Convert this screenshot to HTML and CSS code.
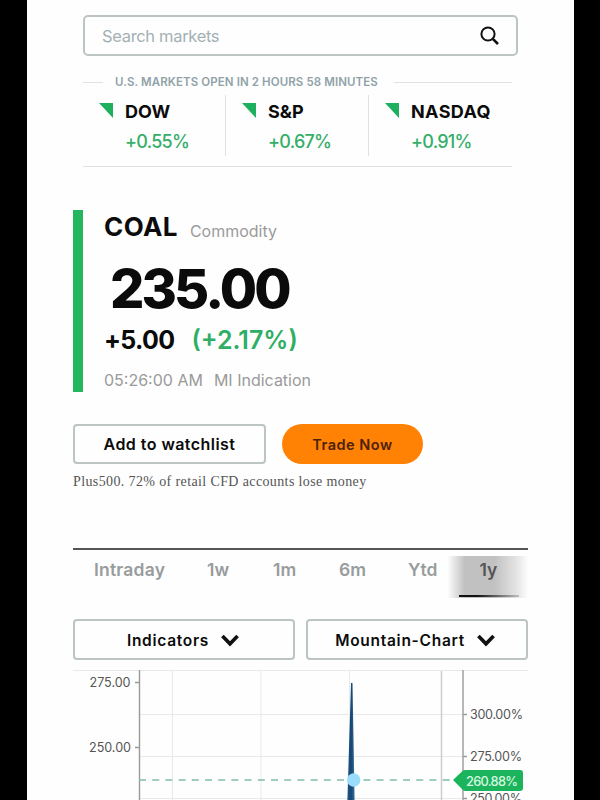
FILE: index.html
```html
<!DOCTYPE html>
<html lang="en">
<head>
<meta charset="utf-8">
<title>Coal price</title>
<link rel="stylesheet" href="styles.css">
</head>
<body>
<main class="page">
  <header class="top">
    <div class="search">
      <span class="placeholder">Search markets</span>
      <svg width="20" height="20" viewBox="0 0 20 20" fill="none" stroke="#111"><circle cx="8" cy="8" r="6.6" stroke-width="2"/><path d="M12.8 12.8L18 18" stroke-width="2.6"/></svg>
    </div>
    <div class="status"><span class="status-text">U.S. MARKETS OPEN IN 2 HOURS 58 MINUTES</span></div>
    <div class="indices">
      <div class="index"><i class="arrow"></i><div><div class="name">DOW</div><div class="change">+0.55%</div></div></div>
      <div class="index"><i class="arrow"></i><div><div class="name">S&amp;P</div><div class="change">+0.67%</div></div></div>
      <div class="index"><i class="arrow"></i><div><div class="name nasdaq">NASDAQ</div><div class="change">+0.91%</div></div></div>
    </div>
  </header>

  <section class="quote">
    <div class="title"><h1>COAL</h1><span class="kind">Commodity</span></div>
    <div class="price">235.00</div>
    <div class="move"><span class="abs">+5.00</span><span class="pct">(+2.17%)</span></div>
    <div class="time"><span class="clock">05:26:00 AM</span><span class="source">MI Indication</span></div>
  </section>

  <div class="actions">
    <button class="watch"><span>Add to watchlist</span></button>
    <button class="trade"><span>Trade Now</span></button>
  </div>
  <p class="disclaimer">Plus500. 72% of retail CFD accounts lose money</p>

  <nav class="ranges">
    <span class="r-intraday">Intraday</span><span class="r-1w">1w</span><span class="r-1m">1m</span><span class="r-6m">6m</span><span class="r-ytd">Ytd</span><span class="active">1y</span>
  </nav>

  <div class="selects">
    <button class="select"><span>Indicators</span><svg width="18" height="13" viewBox="0 0 18 13" fill="none" stroke="#111" stroke-width="3.6"><path d="M1.4 2L9 9.8L16.6 2"/></svg></button>
    <button class="select"><span>Mountain-Chart</span><svg width="18" height="13" viewBox="0 0 18 13" fill="none" stroke="#111" stroke-width="3.6"><path d="M1.4 2L9 9.8L16.6 2"/></svg></button>
  </div>

  <svg class="chart" width="455" height="130" viewBox="73 670 455 130">
    <defs><linearGradient id="peak"><stop offset="0" stop-color="#1c568b"/><stop offset=".5" stop-color="#154672"/><stop offset="1" stop-color="#386b97"/></linearGradient></defs>
    <path class="grid" d="M73 670.5H528M172.5 671V800M261 671V800M349.5 671V800M140 714.5H462M140 756.5H462M140 798.5H462"/>
    <path class="edge" d="M441.5 671V800"/>
    <path class="axis" d="M139.5 670V800M463 670V800M135 682.5H139M135 747.5H139M463 714.5H467M463 756.5H467M463 798.5H467"/>
    <path d="M351 683H352.5L354.6 800H347.4Z" fill="url(#peak)"/>
    <path class="level" d="M139 780H456"/>
    <circle cx="353.7" cy="780" r="6.7" fill="#99dcfb"/>
    <g class="labels">
      <text x="89.5" y="687" textLength="41">275.00</text>
      <text x="89" y="752" textLength="42">250.00</text>
      <text x="470" y="719" textLength="53">300.00%</text>
      <text x="470" y="761" textLength="52">275.00%</text>
      <text x="470" y="803" textLength="52">250.00%</text>
    </g>
    <path d="M453 780L463 770.5Q464 770 465 770H520Q523 770 523 773V788Q523 791 520 791H465Q464 791 463 790Z" fill="#1bb35b"/>
    <text class="tag" x="466" y="786" textLength="52">260.88%</text>
  </svg>
</main>
</body>
</html>
```
FILE: styles.css
```css
* { box-sizing: border-box; }
body { margin: 0; background: #000; font-family: Inter, "Liberation Sans", sans-serif; color: #0b0b0b; }
h1, p { margin: 0; }
button { font: inherit; color: inherit; background: none; padding: 0; }
span, h1, .name, .change, .price { white-space: nowrap; }

.page { width: 547px; height: 800px; margin-left: 27px; padding: 15px 46px 0; background: #fefefe; overflow: hidden; }

.top { width: 435px; margin-left: 10px; }
.search { display: flex; align-items: center; justify-content: space-between; height: 41px; padding: 0 16px 0 17px; border: 2px solid #bcc4c4; border-radius: 5px; }
.placeholder { font-size: 16.5px; color: #a3b0b4; letter-spacing: -.33px; }
.status { display: flex; align-items: center; gap: 12px; width: 429px; height: 16px; margin-top: 18px; }
.status::before { content: ""; width: 20px; height: 1px; background: #dfe3e3; }
.status::after { content: ""; flex: 1; height: 1px; margin-left: 4px; background: #dfe3e3; }
.status-text { font-size: 11.5px; font-weight: 600; color: #90a2a8; letter-spacing: .1px; }
.indices { display: grid; grid-template-columns: 143px 143px 143px; width: 429px; height: 77px; padding-top: 5px; border-bottom: 1px solid #dfe1e1; }
.index { display: flex; gap: 12px; height: 61px; padding-left: 16px; border-right: 1px solid #dfe1e1; }
.index:last-child { border: 0; }
.arrow { width: 14px; height: 15px; margin-top: 8px; background: #1eb05e; clip-path: polygon(0 0, 100% 0, 100% 100%); }
.name { font-size: 18px; font-weight: 700; line-height: 31px; height: 31px; padding-top: 1px; }
.nasdaq { letter-spacing: .4px; }
.change { font-size: 18px; font-weight: 500; line-height: 32px; color: #35ae69; letter-spacing: -.75px; }

.quote { height: 182px; margin-top: 43px; padding-left: 21px; border-left: 10px solid #22b65f; }
.title { display: flex; align-items: center; gap: 12px; height: 34px; }
h1 { font-size: 26px; font-weight: 700; line-height: 34px; letter-spacing: .4px; }
.kind { padding-top: 7px; font-size: 16px; color: #9b9b9b; }
.price { margin-left: 6px; font-size: 54px; font-weight: 800; line-height: 60px; height: 78px; padding-top: 15px; letter-spacing: -2.9px; }
.move { display: flex; gap: 17px; height: 36px; font-size: 25px; line-height: 36px; }
.abs { font-weight: 700; letter-spacing: -.65px; }
.pct { font-weight: 600; color: #2fae65; }
.time { display: flex; gap: 11px; height: 34px; margin-top: 5px; font-size: 16px; line-height: 34px; color: #9a9a9a; }

.actions { display: flex; gap: 16px; height: 40px; margin-top: 32px; }
.watch { width: 193px; border: 2px solid #bcc4c4; border-radius: 4px; font-size: 16px; font-weight: 600; letter-spacing: .45px; }
.trade { width: 141px; border: 0; border-radius: 20px; background: #ff8204; color: #4c210c; font-size: 14.5px; font-weight: 600; letter-spacing: .5px; }
.disclaimer { height: 20px; margin-top: 8px; font: 14px/20px "Liberation Serif", serif; color: #555; white-space: nowrap; letter-spacing: .38px; }

.ranges { display: flex; height: 50px; margin-top: 56px; border-top: 2px solid #555; font-size: 17.5px; font-weight: 600; line-height: 40px; color: #989c9c; }
.ranges span { flex: none; }
.r-intraday { width: 113px; margin-left: 21px; letter-spacing: .2px; }
.r-1w { width: 66px; }
.r-1m { width: 66px; }
.r-6m { width: 69px; }
.r-ytd { width: 39px; }
.ranges .active { width: 81px; height: 42px; margin-top: 6px; padding-left: 2px; line-height: 28px; text-align: center; color: #555; background: linear-gradient(90deg, #111 0, #111 30%, #c0c0c0) 12px 39px / 60px 2px no-repeat, linear-gradient(90deg, #fff, #c1c1c1 22%, #c1c1c1 58%, #e1e1e1 84%, #fdfdfd); }

.selects { display: flex; gap: 11px; height: 41px; margin-top: 21px; }
.select { display: flex; align-items: center; justify-content: center; gap: 12px; width: 222px; border: 2px solid #bcc4c4; border-radius: 4px; font-size: 15.5px; font-weight: 600; letter-spacing: .72px; padding: 2px 4px 0 0; }
.select:first-child { padding-right: 2px; }

.chart { display: block; margin-top: 10px; }
.grid { fill: none; stroke: #e9e9e9; }
.edge { stroke: #cecece; stroke-width: 1.5; }
.axis { fill: none; stroke: #9a9a9a; stroke-width: 1.4; }
.level { stroke: #83bda5; stroke-width: 1.6; stroke-dasharray: 7 6.2; }
.labels { font-size: 12.6px; fill: #555; }
.tag { font-size: 12.8px; font-weight: 500; fill: #d5f8e0; }
```
